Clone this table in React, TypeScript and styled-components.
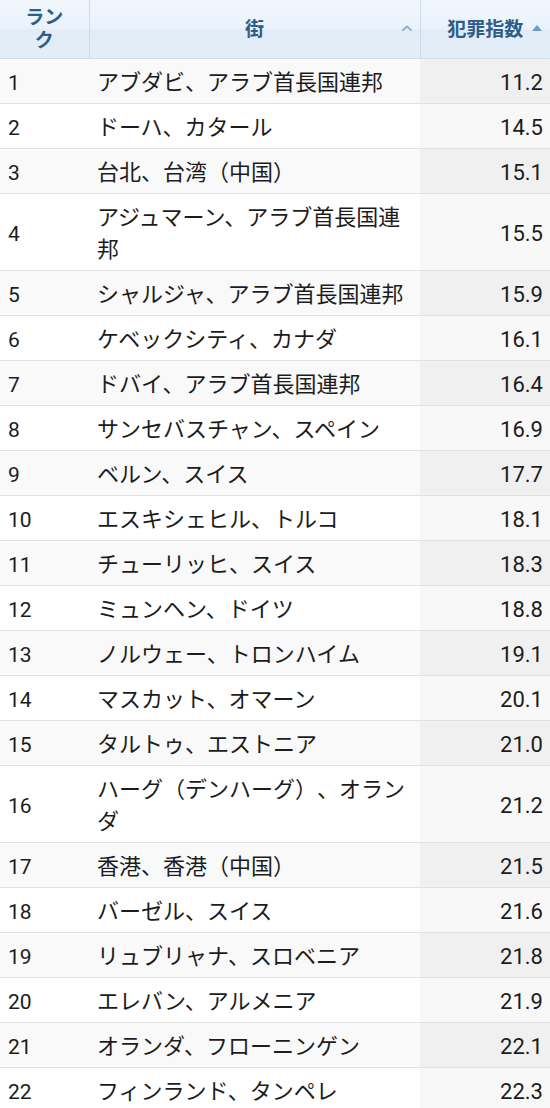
import styled, { createGlobalStyle } from "styled-components";

const GlobalStyle = createGlobalStyle`
  html, body {
    margin: 0;
    padding: 0;
    background: #ffffff;
  }
  body {
    font-family: Roboto, "Noto Sans CJK JP", sans-serif;
    text-spacing-trim: space-all;
  }
`;

interface Row {
  rank: number;
  city: string;
  index: string;
}

const rows: Row[] = [
  { rank: 1, city: "アブダビ、アラブ首長国連邦", index: "11.2" },
  { rank: 2, city: "ドーハ、カタール", index: "14.5" },
  { rank: 3, city: "台北、台湾（中国）", index: "15.1" },
  { rank: 4, city: "アジュマーン、アラブ首長国連邦", index: "15.5" },
  { rank: 5, city: "シャルジャ、アラブ首長国連邦", index: "15.9" },
  { rank: 6, city: "ケベックシティ、カナダ", index: "16.1" },
  { rank: 7, city: "ドバイ、アラブ首長国連邦", index: "16.4" },
  { rank: 8, city: "サンセバスチャン、スペイン", index: "16.9" },
  { rank: 9, city: "ベルン、スイス", index: "17.7" },
  { rank: 10, city: "エスキシェヒル、トルコ", index: "18.1" },
  { rank: 11, city: "チューリッヒ、スイス", index: "18.3" },
  { rank: 12, city: "ミュンヘン、ドイツ", index: "18.8" },
  { rank: 13, city: "ノルウェー、トロンハイム", index: "19.1" },
  { rank: 14, city: "マスカット、オマーン", index: "20.1" },
  { rank: 15, city: "タルトゥ、エストニア", index: "21.0" },
  { rank: 16, city: "ハーグ（デンハーグ）、オランダ", index: "21.2" },
  { rank: 17, city: "香港、香港（中国）", index: "21.5" },
  { rank: 18, city: "バーゼル、スイス", index: "21.6" },
  { rank: 19, city: "リュブリャナ、スロベニア", index: "21.8" },
  { rank: 20, city: "エレバン、アルメニア", index: "21.9" },
  { rank: 21, city: "オランダ、フローニンゲン", index: "22.1" },
  { rank: 22, city: "フィンランド、タンペレ", index: "22.3" },
];

const App = () => {
  return (
    <>
      <GlobalStyle />
      <Table>
        <colgroup>
          <col style={{ width: 89 }} />
          <col style={{ width: 331 }} />
          <col style={{ width: 130 }} />
        </colgroup>
        <thead>
          <tr>
            <HeadCell>
              ラン
              <br />ク
            </HeadCell>
            <HeadCell>
              街
              <SortIcon>
                <svg width="12" height="8" viewBox="0 0 12 8" fill="none">
                  <path
                    d="M2 6L6 2.5L10 6"
                    stroke="#8fb2d0"
                    strokeWidth="2"
                    strokeLinecap="round"
                    strokeLinejoin="round"
                  />
                </svg>
              </SortIcon>
            </HeadCell>
            <HeadCell $last>
              犯罪指数
              <SortIcon>
                <svg width="12" height="8" viewBox="0 0 12 8">
                  <path d="M6 1L11 7H1Z" fill="#6f9cc4" />
                </svg>
              </SortIcon>
            </HeadCell>
          </tr>
        </thead>
        <tbody>
          {rows.map((r) => (
            <BodyRow key={r.rank} $odd={r.rank % 2 === 1}>
              <RankCell>{r.rank}</RankCell>
              <CityCell>{r.city}</CityCell>
              <IndexCell $odd={r.rank % 2 === 1}>{r.index}</IndexCell>
            </BodyRow>
          ))}
        </tbody>
      </Table>
    </>
  );
};

export default App;

const Table = styled.table`
  width: 550px;
  table-layout: fixed;
  border-collapse: collapse;
  border-spacing: 0;
  color: #1c1c1c;
`;

const HeadCell = styled.th<{ $last?: boolean }>`
  position: relative;
  height: 58px;
  padding: 1px 4px 0;
  box-sizing: border-box;
  background: linear-gradient(
    to bottom,
    #f1f6fc 0%,
    #e9f2fb 50%,
    #e1ecf7 52%,
    #e3edf8 100%
  );
  border-right: ${(p) => (p.$last ? "none" : "1px solid #cddcea")};
  border-bottom: 1px solid #d3dde6;
  color: #2f5d88;
  font-size: 19px;
  font-weight: 700;
  line-height: 23px;
  text-align: center;
  vertical-align: middle;
`;

const SortIcon = styled.span`
  position: absolute;
  right: 7px;
  top: 24px;
  display: flex;
  line-height: 0;
`;

const BodyRow = styled.tr<{ $odd: boolean }>`
  background: ${(p) => (p.$odd ? "#f9f9f9" : "#ffffff")};
  border-bottom: 1px solid #e2e2e2;
`;

const RankCell = styled.td`
  padding: 8px 4px 4px 8px;
  font-size: 21px;
  line-height: 32px;
  vertical-align: middle;
`;

const CityCell = styled.td`
  padding: 8px 8px 4px 8px;
  font-size: 22px;
  line-height: 32px;
  vertical-align: middle;
  word-break: break-all;
`;

const IndexCell = styled.td<{ $odd: boolean }>`
  padding: 8px 7px 4px 8px;
  background: ${(p) => (p.$odd ? "#f0f0f0" : "#f8f8f8")};
  font-size: 22px;
  line-height: 32px;
  text-align: right;
  vertical-align: middle;
`;
